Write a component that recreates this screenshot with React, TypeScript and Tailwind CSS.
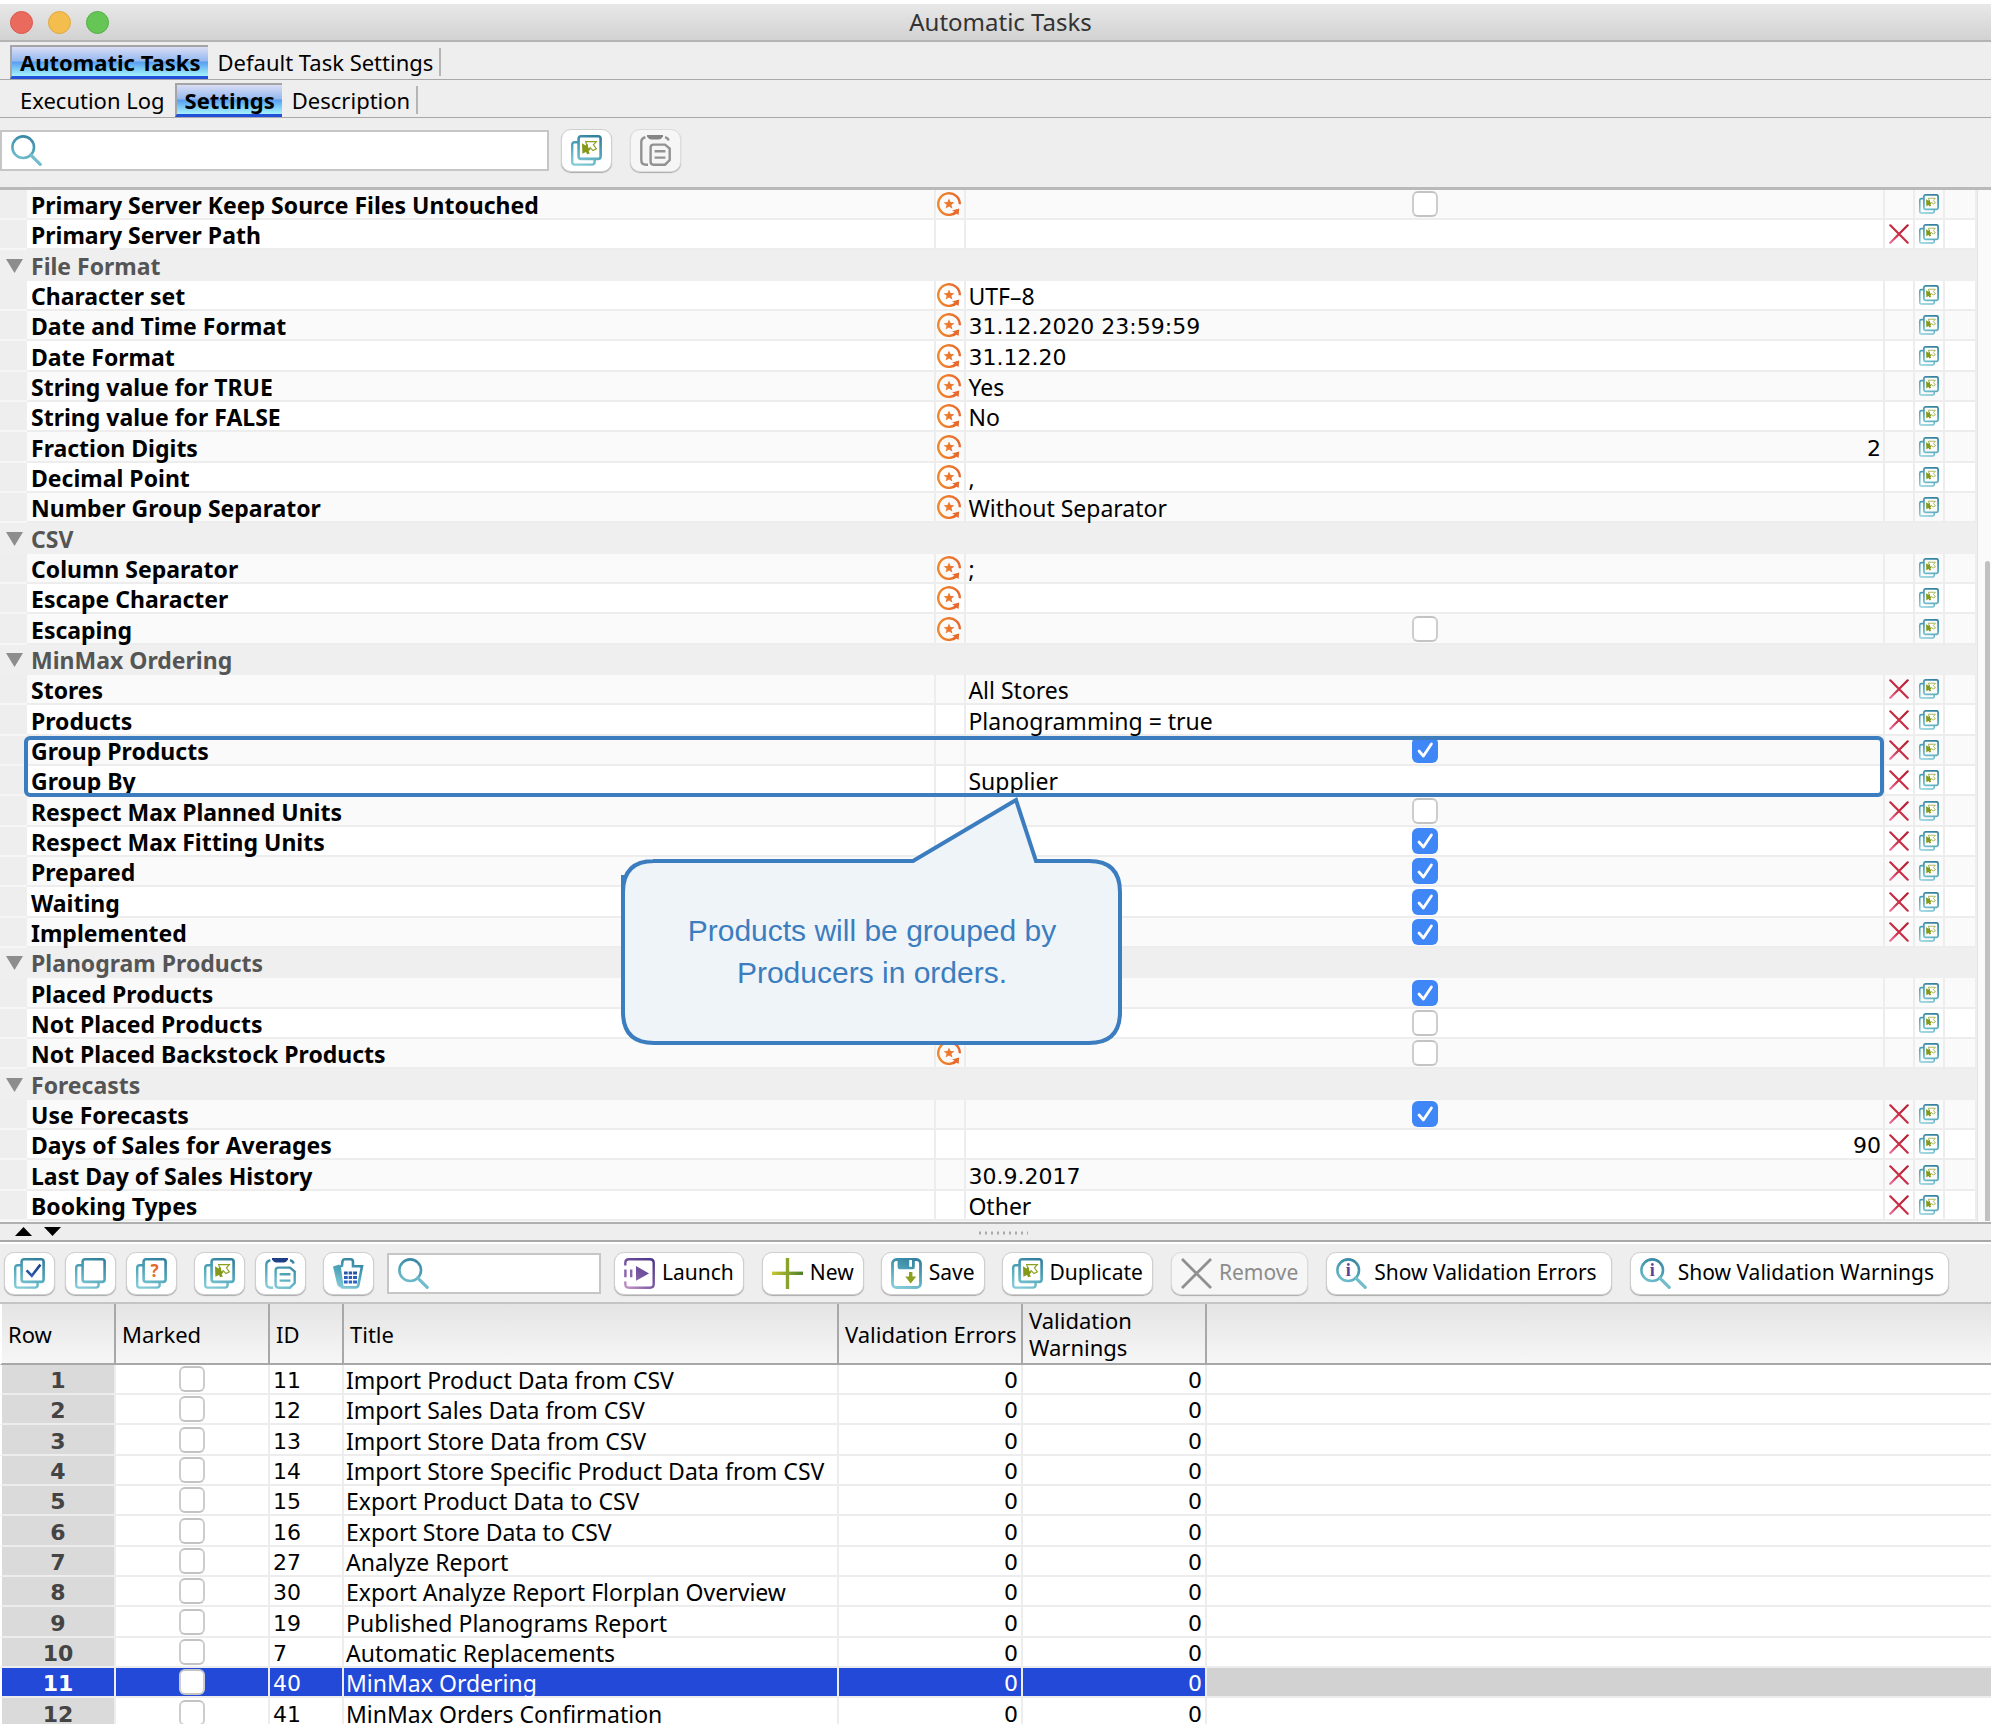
// App.tsx
import { FC, ReactNode } from "react";

interface Setting {
  name: string;
  group?: boolean;
  value?: string;
  numeric?: boolean;
  checked?: boolean;
  inherited?: boolean;
  removable?: boolean;
}

const SETTINGS: Setting[] = [
  { name: "Primary Server Keep Source Files Untouched", inherited: true, checked: false },
  { name: "Primary Server Path", removable: true },
  { name: "File Format", group: true },
  { name: "Character set", inherited: true, value: "UTF–8" },
  { name: "Date and Time Format", inherited: true, value: "31.12.2020 23:59:59" },
  { name: "Date Format", inherited: true, value: "31.12.20" },
  { name: "String value for TRUE", inherited: true, value: "Yes" },
  { name: "String value for FALSE", inherited: true, value: "No" },
  { name: "Fraction Digits", inherited: true, value: "2", numeric: true },
  { name: "Decimal Point", inherited: true, value: "," },
  { name: "Number Group Separator", inherited: true, value: "Without Separator" },
  { name: "CSV", group: true },
  { name: "Column Separator", inherited: true, value: ";" },
  { name: "Escape Character", inherited: true },
  { name: "Escaping", inherited: true, checked: false },
  { name: "MinMax Ordering", group: true },
  { name: "Stores", value: "All Stores", removable: true },
  { name: "Products", value: "Planogramming = true", removable: true },
  { name: "Group Products", checked: true, removable: true },
  { name: "Group By", value: "Supplier", removable: true },
  { name: "Respect Max Planned Units", checked: false, removable: true },
  { name: "Respect Max Fitting Units", checked: true, removable: true },
  { name: "Prepared", checked: true, removable: true },
  { name: "Waiting", checked: true, removable: true },
  { name: "Implemented", checked: true, removable: true },
  { name: "Planogram Products", group: true },
  { name: "Placed Products", checked: true },
  { name: "Not Placed Products", checked: false },
  { name: "Not Placed Backstock Products", inherited: true, checked: false },
  { name: "Forecasts", group: true },
  { name: "Use Forecasts", checked: true, removable: true },
  { name: "Days of Sales for Averages", value: "90", numeric: true, removable: true },
  { name: "Last Day of Sales History", value: "30.9.2017", removable: true },
  { name: "Booking Types", value: "Other", removable: true },
];

const TASKS = [
  { id: 11, title: "Import Product Data from CSV" },
  { id: 12, title: "Import Sales Data from CSV" },
  { id: 13, title: "Import Store Data from CSV" },
  { id: 14, title: "Import Store Specific Product Data from CSV" },
  { id: 15, title: "Export Product Data to CSV" },
  { id: 16, title: "Export Store Data to CSV" },
  { id: 27, title: "Analyze Report" },
  { id: 30, title: "Export Analyze Report Florplan Overview" },
  { id: 19, title: "Published Planograms Report" },
  { id: 7, title: "Automatic Replacements" },
  { id: 40, title: "MinMax Ordering" },
  { id: 41, title: "MinMax Orders Confirmation" },
];

const SELECTED_ID = 40;

/* Gradients shared by all icons */
const IconGradients = () => (
  <svg className="absolute h-0 w-0" aria-hidden="true">
    <defs>
      <linearGradient id="teal" gradientUnits="userSpaceOnUse" x1="22" y1="0" x2="10" y2="31">
        <stop offset="0" stopColor="#34809f" />
        <stop offset="0.5" stopColor="#4fa5b9" />
        <stop offset="1" stopColor="#86cbd8" />
      </linearGradient>
      <linearGradient id="purple" gradientUnits="userSpaceOnUse" x1="28" y1="0" x2="4" y2="31">
        <stop offset="0" stopColor="#4a3387" />
        <stop offset="0.6" stopColor="#7d5ba6" />
        <stop offset="1" stopColor="#c493c4" />
      </linearGradient>
      <linearGradient id="green" gradientUnits="userSpaceOnUse" x1="0" y1="0" x2="31" y2="0">
        <stop offset="0" stopColor="#c9c62f" />
        <stop offset="0.5" stopColor="#8aa32c" />
        <stop offset="1" stopColor="#4b7f2c" />
      </linearGradient>
      <linearGradient id="blue" gradientUnits="userSpaceOnUse" x1="20" y1="4" x2="14" y2="26">
        <stop offset="0" stopColor="#1d3f86" />
        <stop offset="1" stopColor="#2f68cc" />
      </linearGradient>
      <linearGradient id="red" gradientUnits="userSpaceOnUse" x1="24" y1="4" x2="4" y2="28">
        <stop offset="0" stopColor="#b81f33" />
        <stop offset="0.6" stopColor="#cc3049" />
        <stop offset="1" stopColor="#ea6a94" />
      </linearGradient>
      <linearGradient id="orange" gradientUnits="userSpaceOnUse" x1="0" y1="0" x2="24" y2="0">
        <stop offset="0" stopColor="#f08a2c" />
        <stop offset="1" stopColor="#e8652c" />
      </linearGradient>
    </defs>
  </svg>
);

const Icon: FC<{ className?: string; children: ReactNode }> = ({ className = "size-[31px]", children }) => (
  <svg viewBox="0 0 31 31" fill="none" strokeWidth="2.4" className={`${className} shrink-0`} aria-hidden="true">
    {children}
  </svg>
);

const Sheets = () => (
  <>
    <path d="M7 7.2H3.8Q1.2 7.2 1.2 9.8V27Q1.2 29.6 3.8 29.6H21Q23.6 29.6 23.6 27V24.5" stroke="url(#teal)" />
    <rect x="7.6" y="1.3" width="22" height="22.6" rx="2.4" stroke="url(#teal)" strokeWidth="2.6" />
  </>
);

const CheckedIcon = () => (
  <Icon>
    <Sheets />
    <path d="M12.6 12.4l5.2 5.4L26.4 6.6" stroke="url(#blue)" strokeWidth="2.6" />
  </Icon>
);

const UncheckedIcon = () => (
  <Icon>
    <Sheets />
  </Icon>
);

const UnknownIcon = () => (
  <Icon>
    <Sheets />
    <text x="18.6" y="18.6" textAnchor="middle" fontSize="17" fontWeight="700" fontFamily="Noto Sans, sans-serif" fill="#e8692c">
      ?
    </text>
  </Icon>
);

const DuplicateIcon: FC<{ className?: string }> = ({ className }) => (
  <Icon className={className}>
    <Sheets />
    <path d="M14.6 6.6L25.4 6.6 22.4 9.8 25.4 13.8 22 15.6 19.2 12.6 17.4 15z" fill="#fff" stroke="#8a9f1d" strokeWidth="1.1" />
    <path d="M11 8.2L14.6 10.6 16.6 8.8 17.4 13.4 19.6 14.6 17.6 16 18.8 18.4 16.4 19.2 14.8 17 11.4 18.8z" fill="#84991a" />
  </Icon>
);

const PasteIcon: FC<{ disabled?: boolean }> = ({ disabled }) => (
  <Icon>
    <g stroke={disabled ? "#929292" : "url(#teal)"}>
      <path d="M5.4 2.2Q1.3 3 1.3 7V25Q1.3 29.7 6 29.7H8" />
      <path d="M25 2.2Q28 3 28.6 5.6" />
      <path d="M13.5 9.6H25L29.7 13.6V25L25 29.7H13.5Q10.6 29.7 10.6 26.8V12.5Q10.6 9.6 13.5 9.6z" />
      <path d="M14.6 16.3h10.8M14.6 22.6h10.8" />
    </g>
    <path d="M7 0H23V1.6Q21.6 4.4 18.6 4.4H11.4Q8.4 4.4 7 1.6z" fill={disabled ? "#858585" : "url(#blue)"} />
  </Icon>
);

const BasketIcon = () => (
  <Icon>
    <path d="M0 8.4L6.4 6.6 10 29.6 7 29.6Q4.6 29 4 26z" fill="url(#teal)" />
    <path
      d="M9.4 29.4H22.6Q25 29.4 25.4 27L29 8.2H20V4Q20 1.3 17.4 1.3H12Q9.6 1.3 9.4 4L9 7.6 6.6 9z"
      fill="#fff"
      stroke="url(#teal)"
      strokeWidth="2.6"
    />
    <path d="M11 13.4h13v3h-13zM11 18h13v3h-13zM11 22.4h13v3h-13z" fill="url(#blue)" />
    <path d="M15.2 13v13M19.6 13v13" stroke="#fff" strokeWidth="1" />
  </Icon>
);

const SearchIcon: FC<{ children?: ReactNode }> = ({ children }) => (
  <Icon>
    <circle cx="12.2" cy="12.2" r="10.8" stroke="url(#teal)" strokeWidth="2.6" />
    <path d="M19.6 19.8l9.6 9.6" stroke="#72bccb" strokeWidth="3.2" strokeLinecap="round" />
    {children}
  </Icon>
);

const InspectIcon = () => (
  <SearchIcon>
    <text x="12.2" y="18" textAnchor="middle" fontSize="18" fontWeight="700" fontFamily="Liberation Serif, serif" fill="#5b3f9c">
      i
    </text>
  </SearchIcon>
);

const LaunchIcon = () => (
  <Icon>
    <path d="M1.3 7.6V5Q1.3 1.3 5 1.3H26Q29.7 1.3 29.7 5V26Q29.7 29.7 26 29.7H5Q1.3 29.7 1.3 26V23.4" stroke="url(#purple)" />
    <path d="M1.4 11.6v7.6M7.2 11.6v7.6" stroke="#8a63ac" strokeWidth="2.4" />
    <path d="M12 8L25 15.4 12 22.8z" fill="url(#purple)" />
  </Icon>
);

const NewIcon = () => (
  <Icon>
    <path d="M0 13.6h31v3.4h-31z" fill="url(#green)" />
    <path d="M13.8 0h3.4v31h-3.4z" fill="#8aa32c" />
  </Icon>
);

const SaveIcon = () => (
  <Icon>
    <rect x="1.5" y="1.5" width="28" height="28" rx="4" stroke="url(#teal)" strokeWidth="2.8" />
    <path d="M6.6 1.4H23.8V9Q23.8 11.2 21.6 11.2H8.8Q6.6 11.2 6.6 9z" fill="url(#teal)" />
    <path d="M18.2 2h2.8v6.8h-2.8z" fill="#fff" />
    <path d="M18 14h3.4v4.6h3.8L19.7 25.6 14.2 18.6H18z" fill="#8aa01f" />
  </Icon>
);

const RemoveIcon = () => (
  <Icon>
    <path d="M1 1l29 29M30 1L1 30" stroke="#8f8f8f" strokeWidth="2.8" />
  </Icon>
);

const CrossIcon = () => (
  <Icon className="size-5">
    <path d="M2 2l27 27M29 2L2 29" stroke="url(#red)" strokeWidth="3.4" strokeLinecap="round" />
  </Icon>
);

const InheritedIcon = () => (
  <svg viewBox="0 0 24 24" fill="none" className="size-6" aria-hidden="true">
    <path d="M22.8 12.2A10.8 10.8 0 1 0 17 21.6" stroke="url(#orange)" strokeWidth="2.4" />
    <path d="M22.2 16.4L21.6 23 19.6 21.8 16.4 23.6 15.2 21.4 17.4 19.6 15 18.4z" fill="#e8692c" />
    <path d="M12 6.4l1.5 3.6 3.9.3-3 2.5 1 3.8-3.4-2.1-3.4 2.1 1-3.8-3-2.5 3.9-.3z" fill="url(#orange)" />
  </svg>
);

const Checkbox: FC<{ label: string; checked?: boolean }> = ({ label, checked }) => (
  <span className="grid size-[26px]">
    <input
      type="checkbox"
      aria-label={label}
      defaultChecked={checked}
      className="peer col-start-1 row-start-1 size-[26px] appearance-none rounded-md border-2 border-[#c3c3c3] border-x-[#cdcdcd] bg-white checked:border-0 checked:bg-[#3f86f6]"
    />
    <svg viewBox="0 0 26 26" fill="none" className="pointer-events-none invisible col-start-1 row-start-1 size-[26px] peer-checked:visible">
      <path d="M7 14l4.4 5L19.4 7" stroke="#fff" strokeWidth="2.8" strokeLinecap="round" strokeLinejoin="round" />
    </svg>
  </span>
);

const Tab: FC<{ children: ReactNode; active?: boolean; last?: boolean }> = ({ children, active, last }) => (
  <button
    type="button"
    role="tab"
    aria-selected={!!active}
    className={
      active
        ? "h-[34px] border-b-[3px] border-l-2 border-t-2 border-b-[#2350d8] border-l-[#a5a5a5] border-t-[#a5a5a5] bg-[linear-gradient(#d9ddf5_0%,#94b9ef_48%,#579ef0_52%,#7cc9f6_75%,#a6f2fc_100%)] pl-2 pr-[7px] font-bold leading-[30px]"
        : `mb-[3px] h-7 px-[10px] leading-7 ${last ? "border-r-2 border-[#b5b5b5] pr-[6px]" : ""}`
    }
  >
    {children}
  </button>
);

const ToolButton: FC<{ icon: ReactNode; label: string; iconOnly?: boolean; disabled?: boolean; className?: string }> = ({
  icon,
  label,
  iconOnly,
  disabled,
  className = "",
}) => (
  <button
    type="button"
    disabled={disabled}
    aria-label={label}
    className={`flex h-[43px] shrink-0 items-center gap-[7px] whitespace-nowrap rounded-[10px] border px-[9px] text-[21px] shadow-[0_1px_1px_#aaa] ${
      disabled ? "border-[#dcdcdc] bg-[#f6f6f6] text-[#8c8c8c]" : "border-[#cfcfcf] bg-white text-black"
    } ${className}`}
  >
    {icon}
    {!iconOnly && <span>{label}</span>}
  </button>
);

const SearchField: FC<{ label: string; className: string }> = ({ label, className }) => (
  <label className={`flex h-[41px] items-center border-2 border-[#c6c6c6] bg-white pl-[9px] ${className}`}>
    <SearchIcon />
    <input type="search" aria-label={label} className="ml-2 min-w-0 flex-1 outline-none" />
  </label>
);

const cell = "border-b-2 border-r-2 border-[#ededed] p-0";
const textCell = "pt-[2px] text-[23px] leading-[26px]";
const digits = "pt-[3px] font-['DejaVu_Sans',sans-serif] text-[22px] leading-[25px]";

const SettingRow: FC<{ setting: Setting }> = ({ setting }) => {
  if (setting.group) {
    return (
      <tr className="h-[30px] bg-[#efefef] nth-[3n]:h-[31px]">
        <td className="p-0">
          <button type="button" aria-label={`Collapse ${setting.name}`} className="ml-[6px] block">
            <svg viewBox="0 0 17 14" className="h-[14px] w-[17px]">
              <path d="M0 0h17L8.5 14z" fill="#8d8d8d" />
            </svg>
          </button>
        </td>
        <th colSpan={6} scope="rowgroup" className="p-0 pl-1 text-left text-[23px] font-bold text-[#555]">
          {setting.name}
        </th>
      </tr>
    );
  }
  const startsWithDigit = /^\d/.test(setting.value ?? "");
  return (
    <tr className="h-[30px] odd:bg-[#fafafa] even:bg-white nth-[3n]:h-[31px]">
      <td className="border-b-2 border-[#f6f6f6] bg-[#eee] p-0" />
      <th scope="row" className={`${cell} ${textCell} pl-1 text-left font-bold`}>
        {setting.name}
      </th>
      <td className={`${cell} pl-px`}>{setting.inherited && <InheritedIcon />}</td>
      {setting.checked === undefined ? (
        <td className={`${cell} ${startsWithDigit ? digits : textCell} px-[2px] ${setting.numeric ? "text-right" : ""}`}>
          {setting.value}
        </td>
      ) : (
        <td className={cell}>
          <span className="flex justify-center">
            <Checkbox label={setting.name} checked={setting.checked} />
          </span>
        </td>
      )}
      <td className={cell}>
        {setting.removable && (
          <button type="button" aria-label={`Reset ${setting.name}`} className="mx-auto block">
            <CrossIcon />
          </button>
        )}
      </td>
      <td className={cell}>
        <button type="button" aria-label={`Duplicate ${setting.name}`} className="mx-auto block">
          <DuplicateIcon className="size-5" />
        </button>
      </td>
      <td className={cell} />
    </tr>
  );
};

const SettingsTable = () => (
  <div className="relative flex border-t-[3px] border-[#b9b9b9] bg-[#fafafa] pb-px">
    <table className="w-full table-fixed border-separate border-spacing-0 leading-7">
      <colgroup>
        <col className="w-[27px]" />
        <col className="w-[46%]" />
        <col className="w-[30px]" />
        <col />
        <col className="w-[30px]" />
        <col className="w-[30px]" />
        <col className="w-[32px]" />
      </colgroup>
      <tbody>
        {SETTINGS.map((setting) => (
          <SettingRow key={setting.name} setting={setting} />
        ))}
      </tbody>
    </table>
    <div className="flex w-[14px] shrink-0 flex-col justify-end border-l border-[#e3e3e3] pl-[7px]">
      <div className="h-[660px] w-[5px] rounded-t-full bg-[#c1c1c1]" />
    </div>

    {/* Highlight around the grouping rows */}
    <div className="pointer-events-none absolute left-6 right-[107px] top-[546px] h-[61px] rounded-md border-4 border-[#3b7dbf]" />

    {/* Callout pointing to the Group By value */}
    <div className="absolute left-[621px] top-[607px] h-[248px] w-[502px] pt-[62px]">
      <svg viewBox="0 0 502 248" fill="none" className="absolute inset-0 h-full w-full">
        <path
          d="M32 64H292L395 3 415 64H468Q499 64 499 95V215Q499 246 468 246H33Q2 246 2 215V95Q2 64 33 64z"
          fill="#eff4f9"
          stroke="#3b7dbf"
          strokeWidth="4"
          strokeLinejoin="miter"
        />
        <path d="M2 78V100" stroke="#3b7dbf" strokeWidth="4" />
      </svg>
      <p className="relative flex h-[186px] items-center justify-center px-12 pb-px text-center font-['Liberation_Sans',Arial,sans-serif] text-[30px] leading-[42px] text-[#3b7dbf]">
        Products will be grouped by Producers in orders.
      </p>
    </div>
  </div>
);

const head = "border-b-2 border-r-2 border-b-[#a8a8a8] border-r-[#a8a8a8] p-0 pl-[6px] pt-px text-left font-normal leading-[27px]";

const TasksTable = () => (
  <table className="w-full shrink-0 table-fixed border-separate border-spacing-0 bg-white leading-7">
    <colgroup>
      <col className="w-[116px]" />
      <col className="w-[154px]" />
      <col className="w-[74px]" />
      <col className="w-[495px]" />
      <col className="w-[184px]" />
      <col className="w-[184px]" />
      <col />
    </colgroup>
    <thead>
      <tr className="h-[61px] bg-linear-to-b from-[#e4e4e4] to-[#f7f7f7]">
        <th scope="col" className={`${head} border-l-2 border-l-white`}>Row</th>
        <th scope="col" className={head}>Marked</th>
        <th scope="col" className={head}>ID</th>
        <th scope="col" className={head}>Title</th>
        <th scope="col" className={`${head} whitespace-nowrap`}>Validation Errors</th>
        <th scope="col" className={head}>
          Validation
          <br />
          Warnings
        </th>
        <td className="border-b-2 border-[#a8a8a8]" />
      </tr>
    </thead>
    <tbody>
      {TASKS.map((task, index) => {
        const selected = task.id === SELECTED_ID;
        const fill = selected ? "bg-[#2249d8] text-white" : "";
        return (
          <tr key={task.id} aria-selected={selected} className="h-[30px] nth-[3n]:h-[31px]">
            <th
              scope="row"
              className={`${cell} ${digits} border-l-2 border-l-white text-center font-bold ${
                selected ? "bg-[#2249d8] text-white" : "bg-[#dadada] text-[#444]"
              }`}
            >
              {index + 1}
            </th>
            <td className={`${cell} ${fill}`}>
              <span className="flex justify-center">
                <Checkbox label={`Mark ${task.title}`} />
              </span>
            </td>
            <td className={`${cell} ${digits} ${fill} pl-[3px]`}>{task.id}</td>
            <td className={`${cell} ${textCell} ${fill} whitespace-nowrap pl-[2px]`}>{task.title}</td>
            <td className={`${cell} ${digits} ${fill} pr-[3px] text-right`}>0</td>
            <td className={`${cell} ${digits} ${fill} pr-[3px] text-right`}>0</td>
            <td className={`border-b-2 border-[#ededed] ${selected ? "bg-[#d2d2d2]" : ""}`} />
          </tr>
        );
      })}
    </tbody>
  </table>
);

const App = () => (
  <div className="flex h-screen flex-col overflow-hidden bg-[#eee] font-['Noto_Sans','Open_Sans',sans-serif] text-[22px] text-black">
    <IconGradients />

    <header className="flex h-[42px] shrink-0 items-center border-b-2 border-t-4 border-b-[#b4b4b4] border-t-white bg-linear-to-b from-[#e8e8e8] to-[#d2d2d2] pl-[10px]">
      <div className="flex flex-1 gap-[15px]">
        <button type="button" aria-label="Close" className="size-[23px] rounded-full border border-[#d9584c] bg-[#eb6a5e]" />
        <button type="button" aria-label="Minimize" className="size-[23px] rounded-full border border-[#dfa83c] bg-[#f4be4f]" />
        <button type="button" aria-label="Zoom" className="size-[23px] rounded-full border border-[#55ae45] bg-[#65c656]" />
      </div>
      <h1 className="text-[24px] leading-8 text-[#333]">Automatic Tasks</h1>
      <div className="flex-1" />
    </header>

    <div role="tablist" className="flex h-[38px] shrink-0 items-end border-b border-[#a8a8a8] pl-[10px]">
      <Tab active>Automatic Tasks</Tab>
      <Tab last>Default Task Settings</Tab>
    </div>
    <div role="tablist" className="flex h-[38px] shrink-0 items-end border-b border-[#a8a8a8] pl-[10px]">
      <Tab>Execution Log</Tab>
      <Tab active>Settings</Tab>
      <Tab last>Description</Tab>
    </div>

    <div className="flex h-[69px] shrink-0 items-center pb-1">
      <SearchField label="Search settings" className="w-[549px]" />
      <ToolButton icon={<DuplicateIcon />} label="Duplicate" iconOnly className="ml-3" />
      <ToolButton icon={<PasteIcon disabled />} label="Paste" iconOnly disabled className="ml-[18px]" />
    </div>

    <SettingsTable />

    <div className="flex h-5 shrink-0 items-start border-b-2 border-t-2 border-b-[#a8a8a8] border-t-[#b0b0b0] pl-[15px] pt-[3px]">
      <div className="flex flex-1 gap-3">
        <button type="button" aria-label="Expand lower panel">
          <svg viewBox="0 0 17 9" className="h-[9px] w-[17px]">
            <path d="M8.5 0L17 9H0z" />
          </svg>
        </button>
        <button type="button" aria-label="Expand upper panel">
          <svg viewBox="0 0 17 9" className="h-[9px] w-[17px]">
            <path d="M0 0h17L8.5 9z" />
          </svg>
        </button>
      </div>
      <svg viewBox="0 0 50 9" className="h-[9px] w-[50px]" aria-hidden="true">
        <path d="M1 6h50" stroke="#aaa" strokeWidth="3" strokeDasharray="2 4" />
      </svg>
      <div className="flex-1" />
    </div>

    <div className="flex h-[62px] shrink-0 items-center border-b-2 border-t-2 border-b-[#c4c4c4] border-t-white pl-1">
      <ToolButton icon={<CheckedIcon />} label="Mark" iconOnly />
      <ToolButton icon={<UncheckedIcon />} label="Unmark" iconOnly className="ml-[10px]" />
      <ToolButton icon={<UnknownIcon />} label="Mark by condition" iconOnly className="ml-[10px]" />
      <ToolButton icon={<DuplicateIcon />} label="Copy" iconOnly className="ml-[17px]" />
      <ToolButton icon={<PasteIcon />} label="Paste" iconOnly className="ml-[10px]" />
      <ToolButton icon={<BasketIcon />} label="Basket" iconOnly className="ml-[17px]" />
      <SearchField label="Search tasks" className="ml-[13px] w-[214px]" />
      <ToolButton icon={<LaunchIcon />} label="Launch" className="ml-[13px]" />
      <ToolButton icon={<NewIcon />} label="New" className="ml-[18px]" />
      <ToolButton icon={<SaveIcon />} label="Save" className="ml-[17px]" />
      <ToolButton icon={<DuplicateIcon />} label="Duplicate" className="ml-[17px]" />
      <ToolButton icon={<RemoveIcon />} label="Remove" disabled className="ml-[18px]" />
      <ToolButton icon={<InspectIcon />} label="Show Validation Errors" className="ml-[18px] pr-[14px]" />
      <ToolButton icon={<InspectIcon />} label="Show Validation Warnings" className="ml-[18px] pr-[14px]" />
    </div>

    <TasksTable />
  </div>
);

export default App;
